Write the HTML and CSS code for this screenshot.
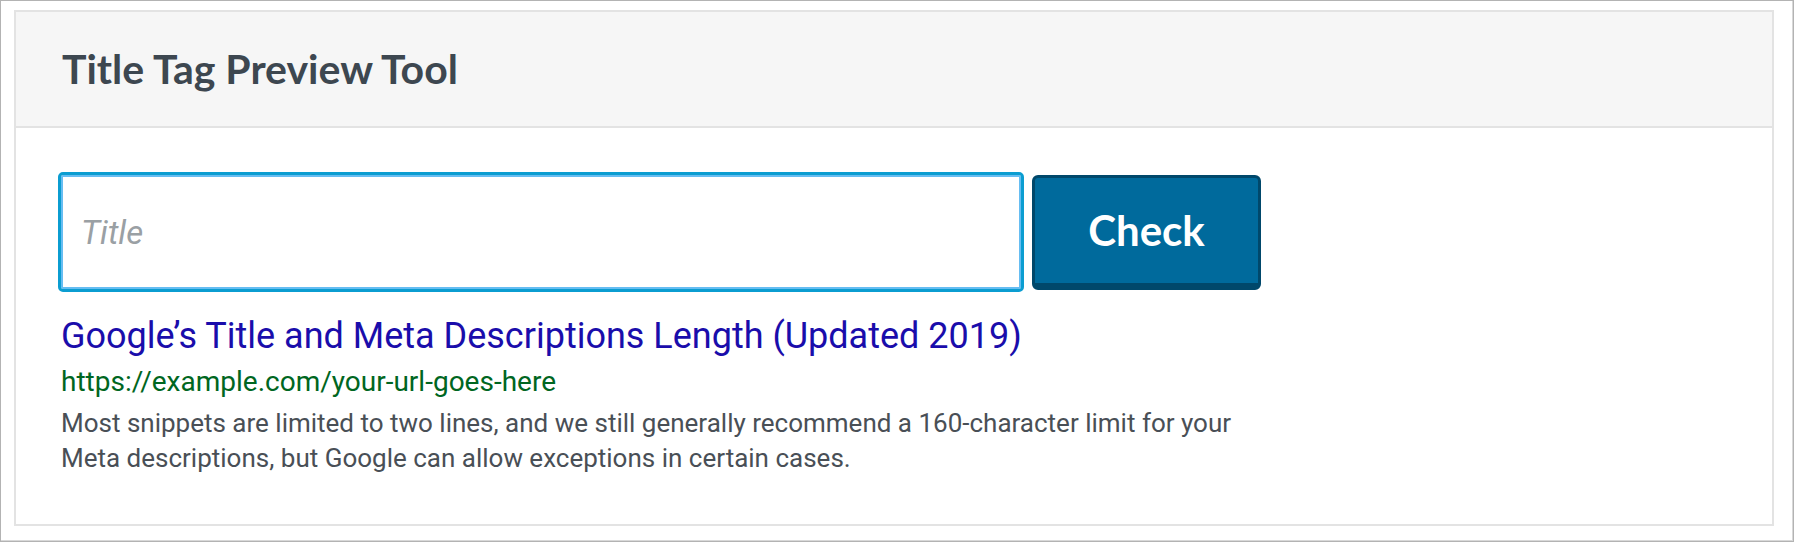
FILE: index.html
```html
<!DOCTYPE html>
<html lang="en">
<head>
    <meta charset="UTF-8">
    <meta name="viewport" content="width=device-width, initial-scale=1.0">
    <title>Title Tag Preview Tool</title>
    <link rel="stylesheet" href="styles.css">
</head>
<body>
    <div class="frame">
        <div class="panel">
            <!-- Panel heading -->
            <div class="panel-heading">
                <h1 class="panel-title">Title Tag Preview Tool</h1>
            </div>
            <div class="panel-body">
                <form class="check-form" onsubmit="return false;">
                    <input class="title-input" type="text" placeholder="Title">
                    <button class="btn-check" type="submit">Check</button>
                </form>
                <!-- Google snippet preview -->
                <div class="snippet">
                    <a class="snippet-title" href="#">Google’s Title and Meta Descriptions Length (Updated 2019)</a>
                    <div class="snippet-url">https://example.com/your-url-goes-here</div>
                    <div class="snippet-desc">Most snippets are limited to two lines, and we still generally recommend a 160-character limit for your Meta descriptions, but Google can allow exceptions in certain cases.</div>
                </div>
            </div>
        </div>
    </div>
</body>
</html>
```

FILE: styles.css
```css
* {
    box-sizing: border-box;
}
html, body {
    margin: 0;
    padding: 0;
    background: #FFFFFF;
}
body {
    font-family: 'Lato', 'Liberation Sans', sans-serif;
}
.frame {
    height: 542px;
    border: 1px solid #B3B3B3;
    box-shadow: inset -1px -1px 0 #D8D8D8;
    padding: 9px 19px 15px 13px;
}
.panel {
    border: 2px solid #E3E3E3;
    background: #FFFFFF;
    height: 100%;
}
.panel-heading {
    background: #F6F6F6;
    border-bottom: 2px solid #E3E3E3;
    padding: 35px 46px;
}
.panel-title {
    margin: 0;
    font-size: 41px;
    line-height: 44px;
    font-weight: 700;
    color: #3D4750;
}
.panel-body {
    padding: 44px 42px;
}
.check-form {
    display: flex;
    align-items: center;
    gap: 8px;
}
.title-input {
    width: 966px;
    height: 120px;
    border: 3px solid #0B9DD1;
    border-radius: 5px;
    box-shadow: inset 0 0 0 2px #66BDF2;
    padding: 0 20px;
    font-family: 'Roboto', 'Liberation Sans', sans-serif;
    font-size: 33px;
    color: #333333;
    outline: none;
}
.title-input::placeholder {
    color: #9AA0A4;
    font-style: italic;
}
.btn-check {
    width: 229px;
    height: 115px;
    background: #006A9C;
    border: 3px solid #00486B;
    border-bottom-width: 7px;
    border-radius: 6px;
    color: #FFFFFF;
    font-family: 'Lato', 'Liberation Sans', sans-serif;
    font-size: 42px;
    font-weight: 700;
    cursor: pointer;
}
.snippet {
    max-width: 1214px;
    margin-top: 24px;
    padding-left: 3px;
    font-family: 'Roboto', 'Liberation Sans', sans-serif;
}
.snippet-title {
    display: block;
    font-size: 36px;
    line-height: 40px;
    color: #1A0DAB;
    text-decoration: none;
}
.snippet-url {
    margin-top: 8px;
    font-size: 28px;
    line-height: 36px;
    color: #006621;
}
.snippet-desc {
    margin-top: 6px;
    font-size: 26px;
    line-height: 35px;
    color: #494F56;
}
```
